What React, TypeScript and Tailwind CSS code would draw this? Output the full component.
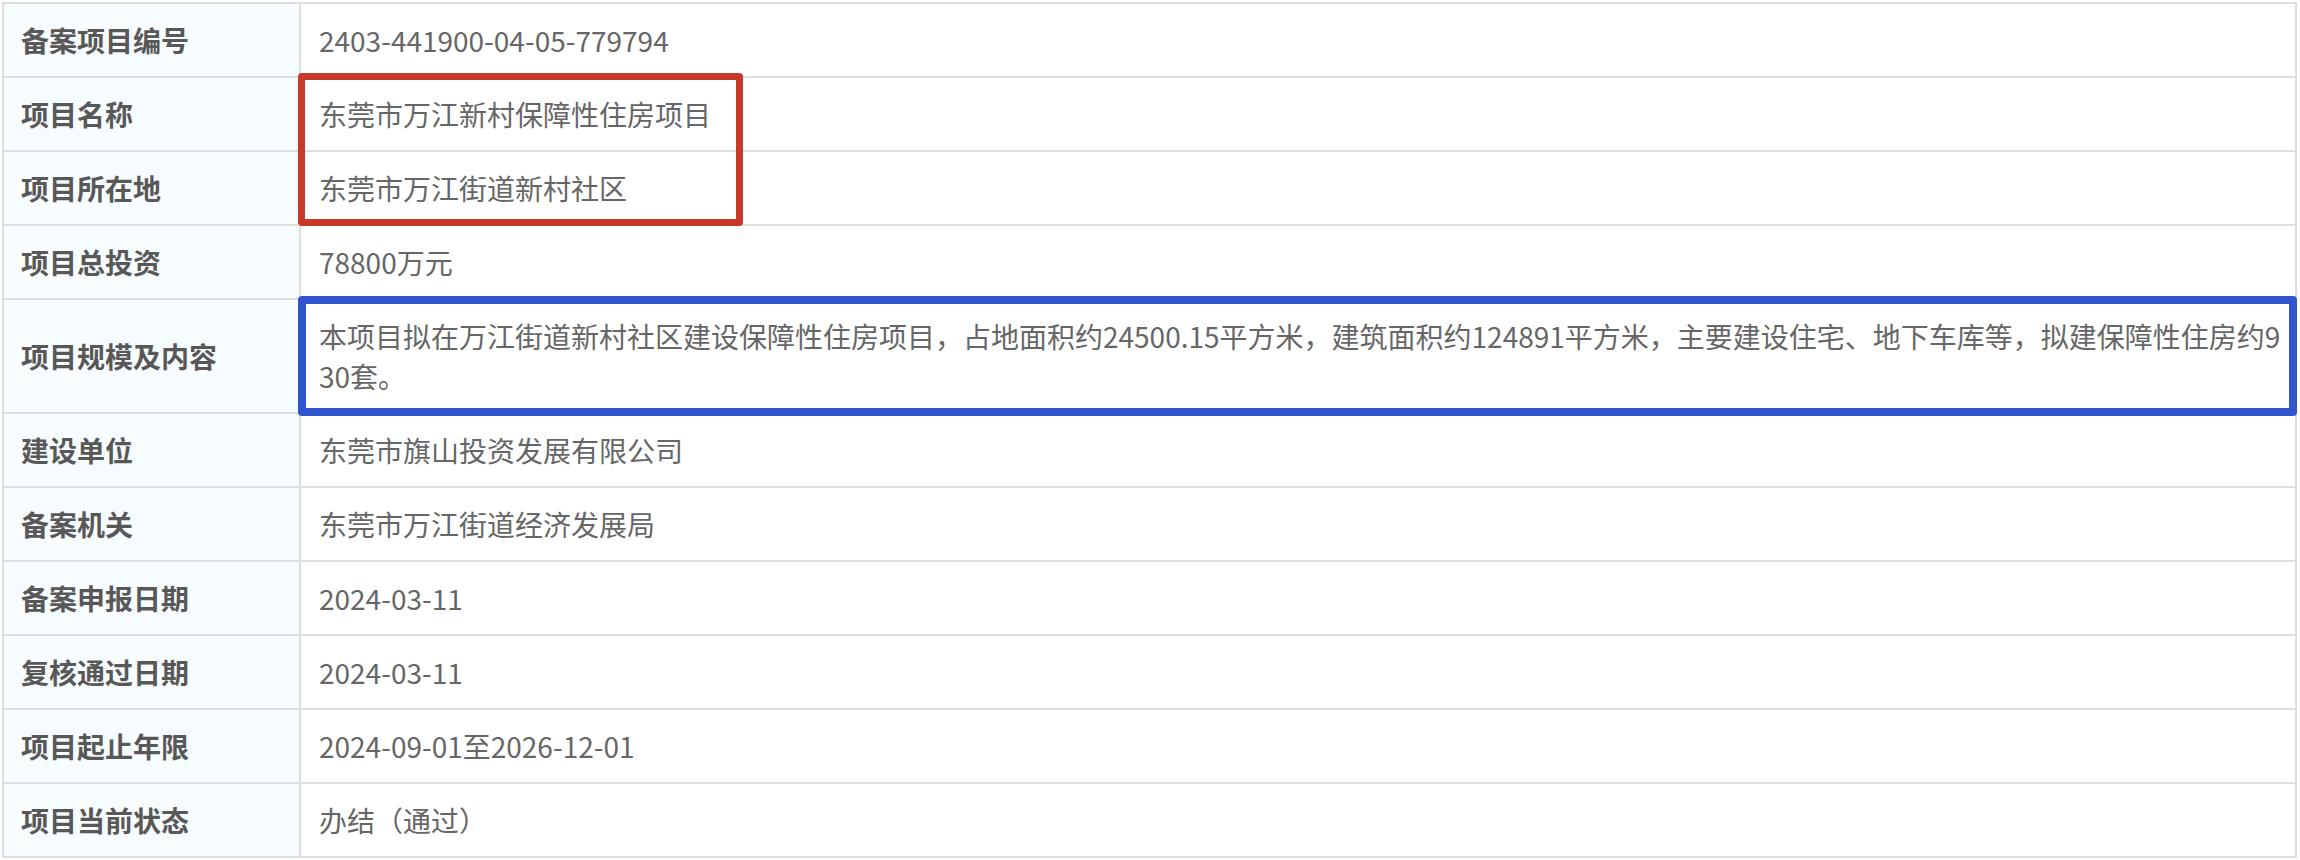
const rows: { label: string; value: React.ReactNode }[] = [
  { label: '备案项目编号', value: '2403-441900-04-05-779794' },
  { label: '项目名称', value: '东莞市万江新村保障性住房项目' },
  { label: '项目所在地', value: '东莞市万江街道新村社区' },
  { label: '项目总投资', value: '78800万元' },
  {
    label: '项目规模及内容',
    value: (
      <>
        <span className="whitespace-nowrap">
          本项目拟在万江街道新村社区建设保障性住房项目，占地面积约24500.15平方米，建筑面积约124891平方米，主要建设住宅、地下车库等，拟建保障性住房约9
        </span>
        <br />
        30套。
      </>
    ),
  },
  { label: '建设单位', value: '东莞市旗山投资发展有限公司' },
  { label: '备案机关', value: '东莞市万江街道经济发展局' },
  { label: '备案申报日期', value: '2024-03-11' },
  { label: '复核通过日期', value: '2024-03-11' },
  { label: '项目起止年限', value: '2024-09-01至2026-12-01' },
  { label: '项目当前状态', value: '办结（通过）' },
]

export default function App() {
  return (
    <div className="min-h-[860px] bg-white pt-[2px] pl-[2px] font-['Noto_Sans_CJK_SC','Noto_Sans',sans-serif] text-[28px] leading-[40px]">
      <div className="relative w-[2295px] border-2 border-[#dedede]">
        {rows.map((row, i) => (
          <div
            key={row.label}
            className={`flex ${i < rows.length - 1 ? 'border-b-2 border-[#dedede]' : ''}`}
          >
            <div className="flex w-[297px] shrink-0 items-center border-r-2 border-[#dedede] bg-[#f7fcfe] py-4 pl-[17px] font-bold text-[#585858]">
              {row.label}
            </div>
            <div className="flex-1 py-4 pl-[18px] pr-4 text-[#666666]">{row.value}</div>
          </div>
        ))}

        {/* annotation boxes */}
        <div className="absolute left-[294px] top-[69px] h-[153px] w-[445px] rounded-[4px] border-[7px] border-[#c8392b]" />
        <div className="absolute left-[294px] top-[292px] h-[120px] w-[1999px] rounded-[4px] border-[8px] border-[#3155cf]" />
      </div>
    </div>
  )
}
